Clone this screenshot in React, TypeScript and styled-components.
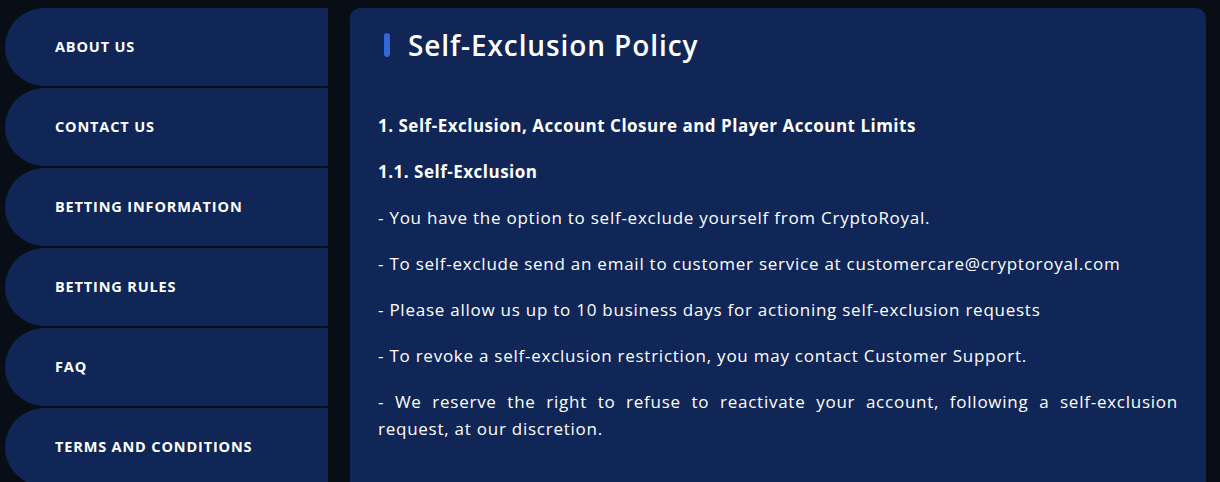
import React from "react";
import styled, { createGlobalStyle } from "styled-components";

const Global = createGlobalStyle`
  html, body { margin: 0; padding: 0; background: #090d16; }
  body { font-family: "Open Sans", "Noto Sans", sans-serif; color: #fff; overflow: hidden; }
`;

const Page = styled.div`
  display: flex;
  gap: 22px;
  padding: 8px 14px 0 5px;
  height: 482px;
  box-sizing: border-box;
  overflow: hidden;
`;

const Sidebar = styled.nav`
  display: flex;
  flex-direction: column;
  gap: 2px;
  width: 323px;
  flex-shrink: 0;
`;

const NavItem = styled.a`
  display: flex;
  align-items: center;
  height: 78px;
  box-sizing: border-box;
  flex-shrink: 0;
  padding: 0 0 2px 50px;
  background: #0f2657;
  border-radius: 39px 0 0 39px;
  color: #fff;
  font-weight: 700;
  font-size: 14.5px;
  letter-spacing: 0.85px;
  text-transform: uppercase;
  text-decoration: none;
`;

const Panel = styled.main`
  flex: 1;
  background: #0f2657;
  border-radius: 10px 10px 0 0;
  padding: 17px 28px 0 28px;
`;

const TitleRow = styled.div`
  display: flex;
  align-items: center;
  gap: 18px;
  padding-left: 6px;
  height: 40px;
`;

const Accent = styled.span`
  width: 6px;
  height: 24px;
  border-radius: 3px;
  background: #3566d6;
`;

const Title = styled.h1`
  margin: 0;
  font-size: 28px;
  font-weight: 600;
  letter-spacing: 0.9px;
`;

const Body = styled.div`
  margin-top: 47px;
  width: 800px;
  display: flex;
  flex-direction: column;
  gap: 19px;
`;

const P = styled.p<{ $bold?: boolean }>`
  margin: 0;
  font-size: 17px;
  line-height: 27px;
  font-weight: ${(p) => (p.$bold ? 700 : 400)};
  letter-spacing: ${(p) => (p.$bold ? "0.5px" : "0.75px")};
  text-align: justify;
`;

const nav = [
  "About us",
  "Contact us",
  "Betting information",
  "Betting rules",
  "FAQ",
  "Terms and conditions",
];

export default function App() {
  return (
    <>
      <Global />
      <Page>
        <Sidebar>
          {nav.map((n) => (
            <NavItem key={n} href="#">{n}</NavItem>
          ))}
        </Sidebar>
        <Panel>
          <TitleRow>
            <Accent />
            <Title>Self-Exclusion Policy</Title>
          </TitleRow>
          <Body>
            <P $bold>1. Self-Exclusion, Account Closure and Player Account Limits</P>
            <P $bold>1.1. Self-Exclusion</P>
            <P>- You have the option to self-exclude yourself from CryptoRoyal.</P>
            <P>- To self-exclude send an email to customer service at customercare@cryptoroyal.com</P>
            <P>- Please allow us up to 10 business days for actioning self-exclusion requests</P>
            <P>- To revoke a self-exclusion restriction, you may contact Customer Support.</P>
            <P>- We reserve the right to refuse to reactivate your account, following a self-exclusion request, at our discretion.</P>
          </Body>
        </Panel>
      </Page>
    </>
  );
}
